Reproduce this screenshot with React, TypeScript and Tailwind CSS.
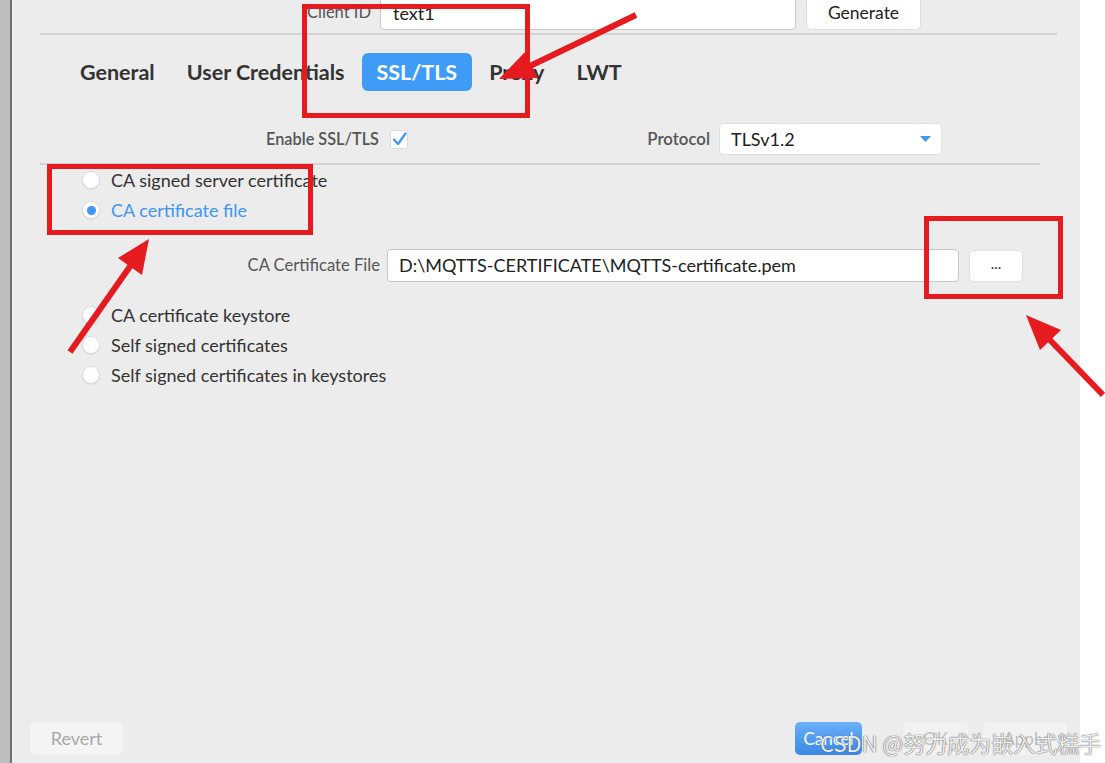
import React from 'react';

const radios = [
  { label: 'CA signed server certificate', checked: false },
  { label: 'CA certificate file', checked: true },
];

const radiosAfter = [
  'CA certificate keystore',
  'Self signed certificates',
  'Self signed certificates in keystores',
];

function Radio({ label, checked }: { label: string; checked?: boolean }) {
  return (
    <div className="flex items-center h-[30px] pl-[70px]">
      <div className="w-[18px] h-[18px] rounded-full bg-white border border-[#dcdcdc] shadow-[0_1px_1px_rgba(0,0,0,0.08)] flex items-center justify-center">
        {checked && <div className="w-[9px] h-[9px] rounded-full bg-[#3d96f0]" />}
      </div>
      <span className={`ml-[11px] text-[18px] ${checked ? 'text-[#3d96f0]' : 'text-[#333]'}`}>{label}</span>
    </div>
  );
}

export default function App() {
  const tabs = ['General', 'User Credentials', 'SSL/TLS', 'Proxy', 'LWT'];

  return (
    <div className="relative w-[1105px] h-[763px] flex overflow-hidden font-['Lato','Liberation_Sans',sans-serif] bg-white">
      {/* left window edge */}
      <div className="w-[10px] bg-[#bdbdbd]" />
      <div className="w-[2px] bg-[#6e6e6e]" />

      {/* dialog body */}
      <div className="w-[1068px] bg-[#ececec] flex flex-col">
        {/* client id row, cut at top */}
        <div className="flex items-center mt-[-4px] h-[34px]">
          <div className="w-[368px] text-right text-[16.5px] text-[#555] pr-[9px] mt-[-2px]">Client ID</div>
          <div className="w-[416px] h-[34px] bg-white border border-[#c9c9c9] rounded-[4px] flex items-center pl-[12px] text-[18px] text-[#222]">
            text1
          </div>
          <div className="ml-[10px] w-[115px] h-[34px] bg-white rounded-[5px] border border-[#dedede] flex items-center justify-center text-[17.5px] text-[#222]">
            Generate
          </div>
        </div>

        <div className="ml-[28px] w-[1017px] h-[2px] bg-[#d3d3d3] mt-[3px]" />

        {/* tabs */}
        <div className="flex items-center gap-[2px] ml-[53px] mt-[18px] h-[38px]">
          {tabs.map((t) => (
            <div
              key={t}
              className={`h-[38px] px-[15px] flex items-center rounded-[6px] text-[21.5px] font-bold ${
                t === 'SSL/TLS' ? 'bg-[#3f9cf6] text-white' : 'text-[#333]'
              }`}
            >
              {t}
            </div>
          ))}
        </div>

        {/* enable / protocol */}
        <div className="flex items-center mt-[32px] h-[32px]">
          <div className="w-[367px] text-right text-[16.3px] font-semibold text-[#555]">Enable SSL/TLS</div>
          <div className="ml-[11px] w-[18px] h-[19px] bg-white rounded-[3px] border border-[#dcdcdc] flex items-center justify-center">
            <svg width="15" height="14" viewBox="0 0 15 14">
              <path d="M2 7.5 L6 12 L13.5 1.5" fill="none" stroke="#3d96f0" strokeWidth="2.2" strokeLinecap="round" strokeLinejoin="round" />
            </svg>
          </div>
          <div className="w-[302px] text-right text-[16.8px] font-semibold text-[#555]">Protocol</div>
          <div className="ml-[9px] w-[223px] h-[32px] bg-white rounded-[4px] border border-[#e0e0e0] flex items-center justify-between pl-[11px] pr-[10px]">
            <span className="text-[18px] text-[#222]">TLSv1.2</span>
            <svg width="11" height="6" viewBox="0 0 11 6">
              <path d="M0 0 H11 L5.5 6 Z" fill="#3d96f0" />
            </svg>
          </div>
        </div>

        <div className="ml-[28px] w-[1000px] h-[2px] bg-[#d3d3d3] mt-[8px]" />

        {/* certificate options */}
        <div className="flex flex-col">
          {radios.map((r) => (
            <Radio key={r.label} label={r.label} checked={r.checked} />
          ))}
        </div>

        <div className="flex items-center mt-[24px] h-[33px]">
          <div className="w-[368px] text-right text-[16.6px] text-[#555]">CA Certificate File</div>
          <div className="ml-[7px] w-[572px] h-[33px] bg-white border border-[#c6c6c6] rounded-[4px] flex items-center pl-[11px] text-[18px] text-[#222]">
            D:\MQTTS-CERTIFICATE\MQTTS-certificate.pem
          </div>
          <div className="ml-[10px] w-[54px] h-[32px] bg-white border border-[#e2e2e2] rounded-[5px] flex items-center justify-center text-[15px] text-[#333] pb-[4px]">
            ...
          </div>
        </div>

        <div className="flex flex-col mt-[18px]">
          {radiosAfter.map((r) => (
            <Radio key={r} label={r} />
          ))}
        </div>

        <div className="flex-1" />

        {/* bottom buttons */}
        <div className="flex items-center h-[33px] mb-[8px]">
          <div className="ml-[18px] w-[93px] h-[33px] bg-[#f4f4f4] rounded-[5px] flex items-center justify-center text-[18px] text-[#a8a8a8]">
            Revert
          </div>
          <div className="flex-1" />
          <div className="w-[67px] h-[33px] rounded-[5px] bg-gradient-to-b from-[#69b0f7] to-[#3a88e6] flex items-center justify-center text-[17px] text-white">
            Cancel
          </div>
          <div className="ml-[41px] w-[65px] h-[33px] rounded-[5px] bg-[#f2f2f2] flex items-center justify-center text-[17px] text-[#c0c0c0]">
            OK
          </div>
          <div className="ml-[15px] w-[84px] h-[33px] rounded-[5px] bg-[#f2f2f2] flex items-center justify-center text-[17px] text-[#c0c0c0] mr-[13px]">
            Apply
          </div>
        </div>
      </div>
      <div className="flex-1 bg-white" />

      {/* red annotations drawn over the screenshot */}
      <svg className="absolute inset-0 pointer-events-none" width="1105" height="763" viewBox="0 0 1105 763">
        <g fill="none" stroke="#e51b1f" strokeWidth="5">
          <rect x="304.5" y="6.5" width="223" height="109" />
          <rect x="49.5" y="166.5" width="261" height="66" />
          <rect x="926.5" y="218.5" width="134" height="78" />
        </g>
        <g stroke="#e51b1f" strokeWidth="6" strokeLinecap="butt">
          <line x1="636" y1="15" x2="530" y2="66" />
          <line x1="70" y1="352" x2="131" y2="265" />
          <line x1="1103" y1="395" x2="1049" y2="339" />
        </g>
        <g fill="#e51b1f">
          <polygon points="499,79 538,78 525,52" />
          <polygon points="149,239 142,275 118,258" />
          <polygon points="1026,315 1061,330 1040,350" />
        </g>
      </svg>

      {/* watermark */}
      <div className="absolute left-[820px] top-[727px] text-[22px] leading-[30px] text-white/90 font-['Noto_Sans_CJK_SC',sans-serif] [text-shadow:0_0_1px_#555,0_0_1px_#555] whitespace-nowrap pointer-events-none">
        CSDN @努力成为嵌入式糕手
      </div>
    </div>
  );
}
